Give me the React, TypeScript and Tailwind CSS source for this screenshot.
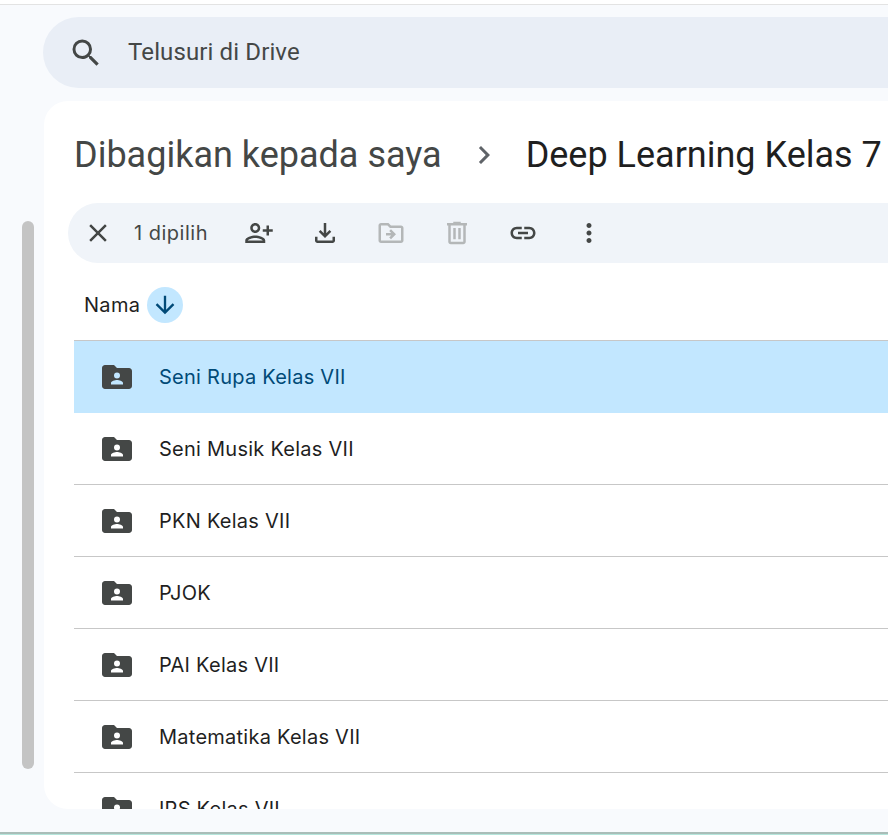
function Icon({ d, className }: { d: string; className: string }) {
  return (
    <svg viewBox="0 0 24 24" fill="currentColor" fillRule="evenodd" className={className}>
      <path d={d} />
    </svg>
  );
}

const icons = {
  search:
    "M15.5 14h-.79l-.28-.27A6.471 6.471 0 0 0 16 9.5 6.5 6.5 0 1 0 9.5 16c1.61 0 3.09-.59 4.23-1.57l.27.28v.79l5 4.99L20.49 19l-4.99-5zm-6 0C7.01 14 5 11.99 5 9.5S7.01 5 9.5 5 14 7.01 14 9.5 11.99 14 9.5 14z",
  close:
    "M19 6.41L17.59 5 12 10.59 6.41 5 5 6.41 10.59 12 5 17.59 6.41 19 12 13.41 17.59 19 19 17.59 13.41 12z",
  share:
    "M9 12c2.21 0 4-1.79 4-4s-1.79-4-4-4-4 1.79-4 4 1.79 4 4 4zm0-6c1.1 0 2 .9 2 2s-.9 2-2 2-2-.9-2-2 .9-2 2-2zm0 8c-2.67 0-8 1.34-8 4v2h16v-2c0-2.66-5.33-4-8-4zm-6 4c.2-.71 3.3-2 6-2s5.8 1.29 6 2H3zM20 9V6h-2v3h-3v2h3v3h2v-3h3V9z",
  download:
    "M18 15v3H6v-3H4v3c0 1.1.9 2 2 2h12c1.1 0 2-.9 2-2v-3h-2zm-1-4l-1.41-1.41L13 12.17V4h-2v8.17L8.41 9.59 7 11l5 5 5-5z",
  move:
    "M20 6h-8l-2-2H4c-1.1 0-2 .9-2 2v12c0 1.1.9 2 2 2h16c1.1 0 2-.9 2-2V8c0-1.1-.9-2-2-2zm0 12H4V6h5.17l2 2H20v10zM12.16 12H8v2h4.16l-1.59 1.59L12 17l4-4-4-4-1.41 1.41z",
  trash:
    "M15 4V3H9v1H4v2h1v13c0 1.1.9 2 2 2h10c1.1 0 2-.9 2-2V6h1V4h-5zm2 15H7V6h10v13zM9 8h2v9H9zm4 0h2v9h-2z",
  link:
    "M17 7h-4v2h4c1.65 0 3 1.35 3 3s-1.35 3-3 3h-4v2h4c2.76 0 5-2.24 5-5s-2.24-5-5-5zm-6 8H7c-1.65 0-3-1.35-3-3s1.35-3 3-3h4V7H7c-2.76 0-5 2.24-5 5s2.24 5 5 5h4v-2zm-3-4h8v2H8z",
  more:
    "M12 8c1.1 0 2-.9 2-2s-.9-2-2-2-2 .9-2 2 .9 2 2 2zm0 2c-1.1 0-2 .9-2 2s.9 2 2 2 2-.9 2-2-.9-2-2-2zm0 6c-1.1 0-2 .9-2 2s.9 2 2 2 2-.9 2-2-.9-2-2-2z",
  arrowDown: "M20 12l-1.41-1.41L13 16.17V4h-2v12.17l-5.58-5.59L4 12l8 8 8-8z",
  chevron: "M8.59 16.59L13.17 12 8.59 7.41 10 6l6 6-6 6z",
  sharedFolder:
    "M20 6h-8l-2-2H4c-1.1 0-2 .9-2 2v12c0 1.1.9 2 2 2h16c1.1 0 2-.9 2-2V8c0-1.1-.9-2-2-2zM12 9a2 2 0 1 1 0 4 2 2 0 0 1 0-4zM8 17v-1c0-1.33 2.67-2 4-2s4 .67 4 2v1H8z",
};

const folders = [
  "Seni Rupa Kelas VII",
  "Seni Musik Kelas VII",
  "PKN Kelas VII",
  "PJOK",
  "PAI Kelas VII",
  "Matematika Kelas VII",
  "IPS Kelas VII",
];

export default function App() {
  return (
    <div className="h-[835px] w-[888px] overflow-hidden flex flex-col bg-white font-['Inter',sans-serif]">
      <div className="h-[5px] shrink-0 border-b border-[#e3e3e3] bg-white" />
      <div className="flex flex-1 min-h-0 bg-[#f8fafd]">
        {/* page scrollbar */}
        <div className="w-[43px] shrink-0 pt-[216px] pl-[22px]">
          <div className="h-[548px] w-3 rounded-md bg-[#c4c4c4]" />
        </div>

        <div className="flex-1 min-w-0 flex flex-col pt-3 pb-[23px]">
          <div className="h-[71px] shrink-0 flex items-center rounded-l-full bg-[#e9eef6] pl-[25px] text-[#444746]">
            <Icon d={icons.search} className="size-9" />
            <span className="ml-[24px] pb-[2px] text-[24px] tracking-[0.12px] font-['Roboto',sans-serif]">Telusuri di Drive</span>
          </div>

          <div className="mt-[13px] ml-px flex-1 min-h-0 overflow-hidden rounded-l-[24px] bg-white">
            <div className="h-[102px] flex items-center pl-[30px] pt-[6px] whitespace-nowrap text-[36px] font-['Roboto',sans-serif]">
              <span className="text-[#444746]">Dibagikan kepada saya</span>
              <Icon d={icons.chevron} className="ml-6 size-9 text-[#5f6368]" />
              <span className="ml-6 text-[#1f1f1f]">Deep Learning Kelas 7</span>
            </div>

            <div className="ml-6 h-[60px] flex items-center rounded-l-full bg-[#f0f4f9] text-[#444746]">
              <Icon d={icons.close} className="ml-[15px] size-[30px]" />
              <span className="ml-[21px] whitespace-nowrap text-[20px] tracking-[0.5px]">1 dipilih</span>
              <div className="ml-[36px] flex gap-[36px]">
                <Icon d={icons.share} className="size-[30px]" />
                <Icon d={icons.download} className="size-[30px]" />
                <Icon d={icons.move} className="size-[30px] text-[#b4b7b8]" />
                <Icon d={icons.trash} className="size-[30px] text-[#b4b7b8]" />
                <Icon d={icons.link} className="size-[30px]" />
                <Icon d={icons.more} className="size-[30px]" />
              </div>
            </div>

            <div className="ml-[30px] h-[78px] flex items-center gap-[7px] border-b border-[#c7c7c7] pl-[10px] pt-[7px]">
              <span className="text-[20px] tracking-[0.3px] text-[#1f1f1f]">Nama</span>
              <span className="size-9 flex items-center justify-center rounded-full bg-[#c2e7ff] text-[#004a77]">
                <Icon d={icons.arrowDown} className="size-7" />
              </span>
            </div>

            <div className="ml-[30px]">
              {folders.map((name, i) => (
                <div
                  key={name}
                  className={
                    i === 0
                      ? "h-[72px] flex items-center bg-[#c2e7ff] pl-[25px] text-[#004a77]"
                      : "h-[72px] flex items-center border-b border-[#c7c7c7] pl-[25px] text-[#1f1f1f]"
                  }
                >
                  <Icon d={icons.sharedFolder} className="size-9 text-[#444746]" />
                  <span className="ml-[24px] text-[20px] tracking-[0.25px]">{name}</span>
                </div>
              ))}
            </div>
          </div>
        </div>
      </div>
      <div className="h-[3px] shrink-0 bg-[linear-gradient(#a9bdb8_66%,#b5e6dc_66%)]" />
    </div>
  );
}
